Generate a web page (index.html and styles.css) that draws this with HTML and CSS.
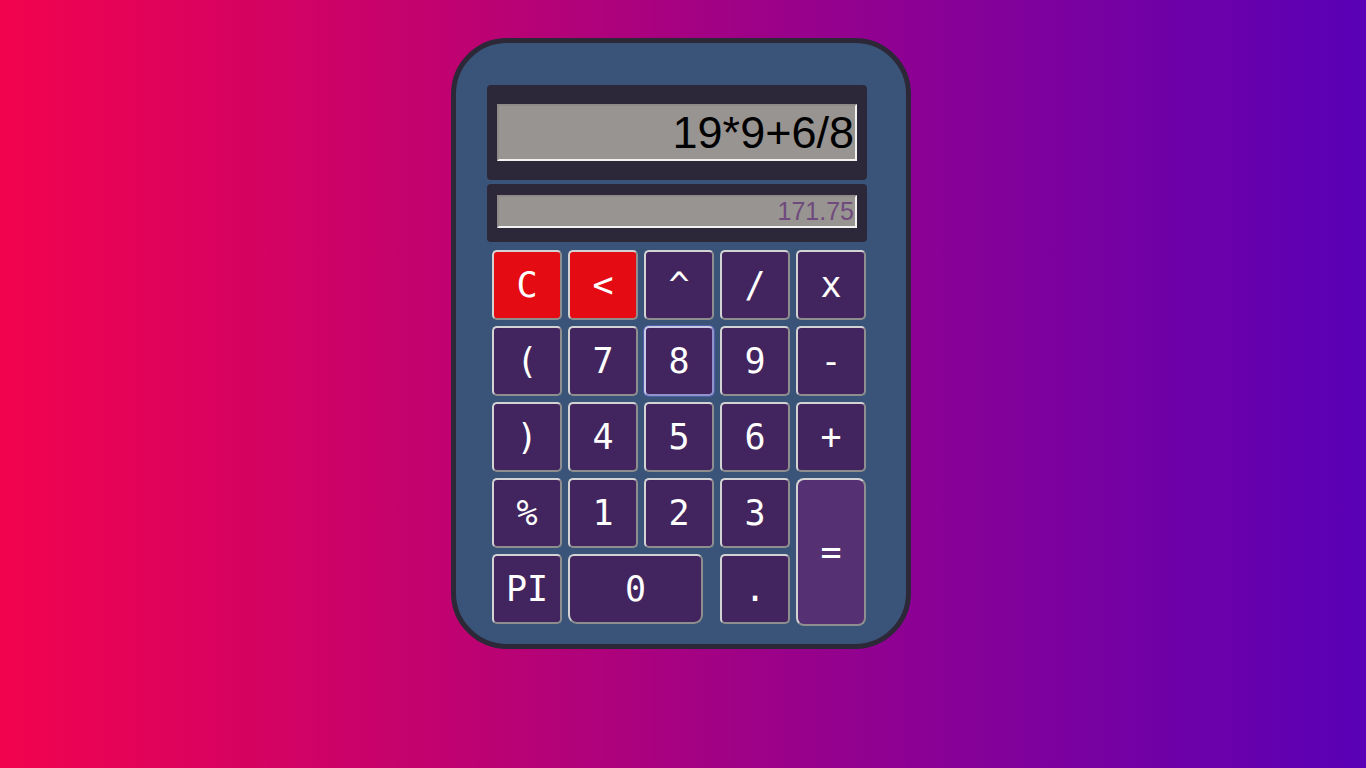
FILE: index.html
```html
<!DOCTYPE html>
<html>
<head>
<meta charset="utf-8">
<link rel="stylesheet" href="styles.css">
</head>
<body>
<div class="calc">
  <div class="screen screen-main"><input class="field field-main" type="text" value="19*9+6/8" readonly></div>
  <div class="screen screen-result"><input class="field field-result" type="text" value="171.75" readonly></div>
  <div class="keys">
    <button class="key red">C</button>
    <button class="key red">&lt;</button>
    <button class="key">^</button>
    <button class="key">/</button>
    <button class="key">x</button>
    <button class="key">(</button>
    <button class="key">7</button>
    <button class="key focus">8</button>
    <button class="key">9</button>
    <button class="key">-</button>
    <button class="key">)</button>
    <button class="key">4</button>
    <button class="key">5</button>
    <button class="key">6</button>
    <button class="key">+</button>
    <button class="key">%</button>
    <button class="key">1</button>
    <button class="key">2</button>
    <button class="key">3</button>
    <button class="key equals">=</button>
    <button class="key">PI</button>
    <button class="key zero">0</button>
    <button class="key dot">.</button>
  </div>
</div>
</body>
</html>
```
FILE: styles.css
```css
html, body {
  margin: 0;
  height: 100%;
}
body {
  background: linear-gradient(to right, #f2034e, #5900b6);
  font-family: "DejaVu Sans Mono", monospace;
  overflow: hidden;
}
.calc {
  box-sizing: border-box;
  width: 460px;
  height: 611px;
  margin: 38px 0 0 451px;
  border: 5px solid #2c2838;
  border-radius: 56px;
  background: #3a5479;
  padding: 42px 38px 0 31px;
  display: flex;
  flex-direction: column;
}
.screen {
  background: #2d2839;
  border-radius: 4px;
  width: 380px;
  box-sizing: border-box;
  padding: 0 10px;
}
.screen-main {
  height: 95px;
  padding-top: 19px;
}
.screen-result {
  height: 58px;
  margin-top: 4px;
  padding-top: 11px;
}
.field {
  display: block;
  box-sizing: border-box;
  width: 360px;
  margin: 0;
  padding: 0 1px 0 2px;
  background: #979492;
  border: 2px solid;
  border-color: #8d8a88 #f2f2f2 #f2f2f2 #8d8a88;
  text-align: right;
  font-family: "Liberation Sans", Arial, sans-serif;
  outline: none;
}
.field-main {
  height: 57px;
  font-size: 45px;
  color: #000;
}
.field-result {
  height: 33px;
  font-size: 25px;
  color: #704a7d;
}
.keys {
  margin: 8px 0 0 5px;
  display: grid;
  grid-template-columns: repeat(5, 70px);
  grid-auto-rows: 70px;
  gap: 6px;
}
.key {
  box-sizing: border-box;
  width: 70px;
  height: 70px;
  margin: 0;
  padding: 0;
  background: #42255e;
  color: #fff;
  font-family: "DejaVu Sans Mono", monospace;
  font-size: 35px;
  border: 2px solid;
  border-color: #d3d3d3 #8e8e8e #8e8e8e #d3d3d3;
  border-radius: 5px;
}
.red {
  background: #e40b12;
}
.focus {
  border-color: #c9c9e6 #8f93c8 #8f93c8 #c9c9e6;
  box-shadow: 0 0 0 1px rgba(96, 104, 214, 0.55);
}
.equals {
  grid-column: 5;
  grid-row: 4 / span 2;
  height: 148px;
  align-self: start;
  background: #553072;
  border-radius: 8px;
}
.zero {
  grid-column: 2 / span 2;
  width: 135px;
  border-radius: 6px 6px 9px 9px;
}
.dot {
  grid-column: 4;
}
```
